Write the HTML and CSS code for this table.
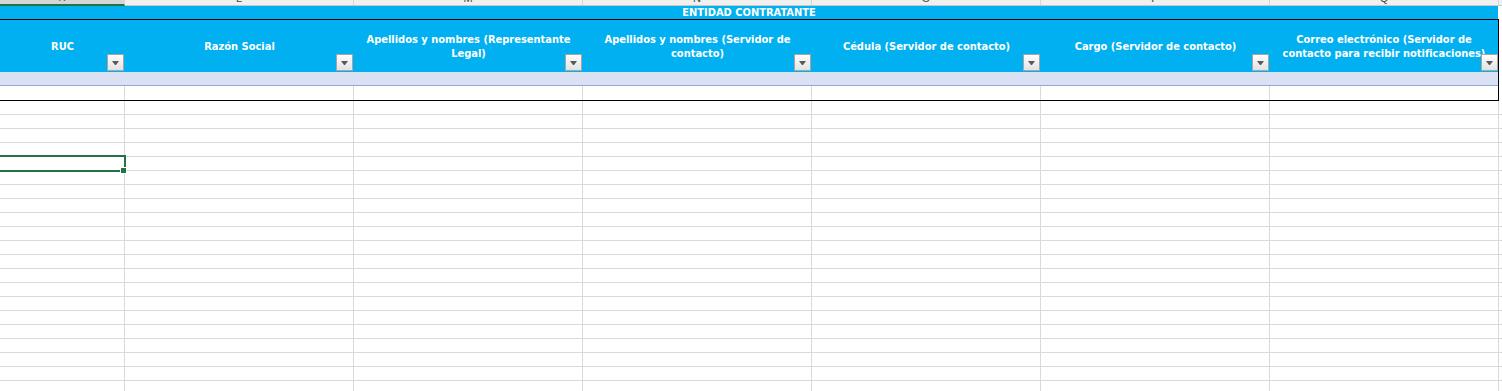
FILE: index.html
```html
<!DOCTYPE html>
<html lang="es">
<head>
<meta charset="utf-8">
<title>Entidad contratante</title>
<link rel="stylesheet" href="styles.css">
</head>
<body>
<div class="page">
  <div class="colbar">
    <div class="ch sel"><span>K</span></div>
    <div class="ch"><span>L</span></div>
    <div class="ch"><span>M</span></div>
    <div class="ch"><span>N</span></div>
    <div class="ch"><span>O</span></div>
    <div class="ch"><span>P</span></div>
    <div class="ch"><span>Q</span></div>
    <div class="ch rest"></div>
  </div>

  <div class="title">ENTIDAD CONTRATANTE</div>

  <div class="box">
    <div class="hdr">
      <div class="hc"><span class="ht">RUC</span><span class="dd"></span></div>
      <div class="hc"><span class="ht">Razón Social</span><span class="dd"></span></div>
      <div class="hc"><span class="ht">Apellidos y nombres (Representante<br>Legal)</span><span class="dd"></span></div>
      <div class="hc"><span class="ht">Apellidos y nombres (Servidor de<br>contacto)</span><span class="dd"></span></div>
      <div class="hc"><span class="ht">Cédula (Servidor de contacto)</span><span class="dd"></span></div>
      <div class="hc"><span class="ht">Cargo (Servidor de contacto)</span><span class="dd"></span></div>
      <div class="hc"><span class="ht">Correo electrónico (Servidor de<br>contacto para recibir notificaciones)</span><span class="dd last"></span></div>
    </div>
    <div class="band"></div>
    <div class="wrow">
      <div class="wc"></div>
      <div class="wc"></div>
      <div class="wc"></div>
      <div class="wc"></div>
      <div class="wc"></div>
      <div class="wc"></div>
      <div class="wc end"></div>
    </div>
  </div>

  <div class="grid">
    <div class="gc first"></div>
    <div class="gc"></div>
    <div class="gc"></div>
    <div class="gc"></div>
    <div class="gc"></div>
    <div class="gc"></div>
    <div class="gc"></div>
    <div class="gc rest"></div>
  </div>

  <div class="selection"></div>
  <div class="handle"></div>
</div>
</body>
</html>
```

FILE: styles.css
```css
* { box-sizing: border-box; }

body {
  margin: 0;
  background: #ffffff;
  font-family: "DejaVu Sans Condensed", "DejaVu Sans", sans-serif;
}

.page {
  position: relative;
  width: 1502px;
  height: 391px;
  overflow: hidden;
  background: #ffffff;
}

/* column letter strip (mostly scrolled off) */
.colbar {
  display: grid;
  grid-template-columns: 125px repeat(6, 229px) 1fr;
  height: 6px;
}
.ch {
  display: flex;
  align-items: flex-end;
  justify-content: center;
  overflow: hidden;
  height: 6px;
  background: #f0f0f0;
  border-right: 1px solid #d4d4d4;
  border-bottom: 1px solid #c8c8c8;
  color: #444444;
  font-family: "Liberation Sans", Arial, sans-serif;
  font-size: 11px;
  line-height: 11px;
}
.ch span { display: block; margin-bottom: 1px; }
.ch.sel {
  background: #d6d6d6;
  border-bottom: 2px solid #217346;
  color: #217346;
}
.ch.rest { border-right: 0; }

/* title band */
.title {
  width: 1498px;
  height: 13px;
  background: #00b0f0;
  color: #ffffff;
  font-weight: bold;
  font-size: 11px;
  line-height: 13px;
  text-align: center;
}

/* bordered table range */
.box {
  width: 1499px;
  border-top: 1px solid #000000;
  border-right: 1px solid #000000;
  border-bottom: 1px solid #000000;
}

.hdr {
  display: grid;
  grid-template-columns: 125px repeat(5, 229px) 1fr;
  height: 52px;
  background: #00b0f0;
}
.hc {
  position: relative;
  display: flex;
  align-items: center;
  justify-content: center;
  padding-top: 2px;
  text-align: center;
}
.ht {
  color: #ffffff;
  font-weight: bold;
  font-size: 11px;
  line-height: 14px;
  white-space: nowrap;
}

.dd {
  position: absolute;
  right: 1px;
  bottom: 1px;
  width: 17px;
  height: 17px;
  border: 1px solid #a6a6a6;
  background: linear-gradient(#fdfdfd, #e3e3e3);
}
.dd.last { right: 0; }
.dd::after {
  content: "";
  position: absolute;
  left: 4px;
  top: 6px;
  width: 1px;
  height: 0;
  border-left: 3px solid transparent;
  border-right: 3px solid transparent;
  border-top: 4px solid #595959;
}

.band {
  height: 14px;
  background: #d9e1f2;
  border-bottom: 1px solid #8ea9db;
}

.wrow {
  display: grid;
  grid-template-columns: 125px repeat(5, 229px) 1fr;
  height: 14px;
}
.wc { border-right: 1px solid #dadada; }
.wc.end { border-right: 0; }

/* empty sheet grid below */
.grid {
  display: flex;
  height: 290px;
  background: repeating-linear-gradient(to bottom,
    transparent 0, transparent 13px,
    #dadada 13px, #dadada 14px);
}
.gc {
  flex: 0 0 229px;
  border-right: 1px solid #dadada;
}
.gc.first { flex-basis: 125px; }
.gc.rest { flex: 1 1 auto; border-right: 0; }

/* active cell selection overlay */
.selection {
  position: absolute;
  left: -2px;
  top: 155px;
  width: 128px;
  height: 17px;
  border: 2px solid #217346;
}
.handle {
  position: absolute;
  left: 120px;
  top: 167px;
  width: 7px;
  height: 7px;
  background: #217346;
  border: 1px solid #ffffff;
}
```
